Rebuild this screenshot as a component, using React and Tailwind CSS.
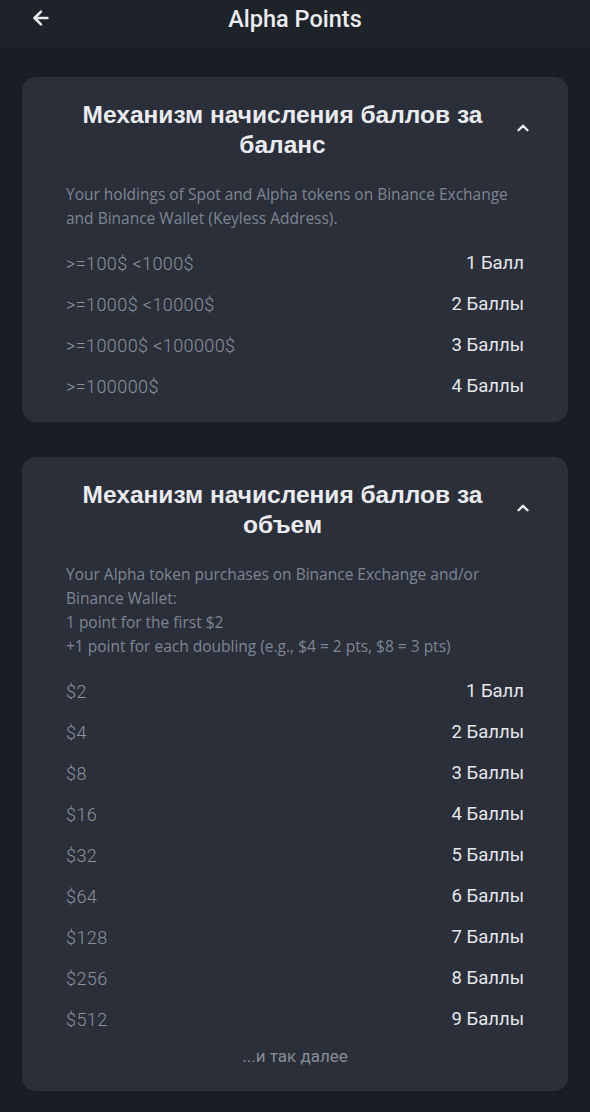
import { ArrowLeft, ChevronUp } from 'lucide-react';

const balanceRows = [
	['>=100$ <1000$', '1 Балл'],
	['>=1000$ <10000$', '2 Баллы'],
	['>=10000$ <100000$', '3 Баллы'],
	['>=100000$', '4 Баллы'],
];

const volumeRows = [
	['$2', '1 Балл'],
	['$4', '2 Баллы'],
	['$8', '3 Баллы'],
	['$16', '4 Баллы'],
	['$32', '5 Баллы'],
	['$64', '6 Баллы'],
	['$128', '7 Баллы'],
	['$256', '8 Баллы'],
	['$512', '9 Баллы'],
];

function Section({ title, children, rows, footer }) {
	return (
		<div className="rounded-[14px] bg-[#2a2f3a] px-[44px] pt-[23px] pb-[14px]">
			<div className="flex items-start">
				<h2 className="flex-1 text-center font-['Liberation_Sans',Arial,sans-serif] text-[24.5px] font-bold leading-[30px] text-[#eaecef]">
					{title}
				</h2>
				<ChevronUp className="mt-[19px] ml-[15px] -mr-[8px] h-[18px] w-[18px] text-[#eaecef]" strokeWidth={3.25} />
			</div>
			<div className="mt-[22px] font-['Open_Sans',sans-serif] text-[15.5px] leading-[24.3px] text-[#7f8692]">
				{children}
			</div>
			<div className="mt-[13px]">
				{rows.map(([left, right]) => (
					<div key={left} className="flex h-[41px] items-center justify-between">
						<span className="-mt-[2px] text-[18px] font-light tracking-[0.4px] text-[#8c929c]">{left}</span>
						<span className="text-[18.5px] font-normal text-[#e4e6e9]">{right}</span>
					</div>
				))}
			</div>
			{footer && (
				<div className="mb-[4px] flex h-[32px] items-center justify-center text-[17px] text-[#868c96]">
					{footer}
				</div>
			)}
		</div>
	);
}

export default function App() {
	return (
		<div className="min-h-[1112px] bg-[#191d24] font-['Roboto',sans-serif]">
			<header className="relative flex h-[48px] items-center justify-center bg-[#1e2229]">
				<ArrowLeft className="absolute left-[30px] top-[7px] h-[22px] w-[22px] text-[#eaecef]" strokeWidth={2.75} />
				<h1 className="-mt-[9px] text-[23.5px] font-medium text-[#eaecef]">Alpha Points</h1>
			</header>

			<div className="flex flex-col gap-[35px] px-[22px] pt-[29px] pb-[20px]">
				<Section title="Механизм начисления баллов за баланс" rows={balanceRows}>
					Your holdings of Spot and Alpha tokens on Binance Exchange and Binance Wallet (Keyless Address).
				</Section>

				<Section title="Механизм начисления баллов за объем" rows={volumeRows} footer="...и так далее">
					<p>Your Alpha token purchases on Binance Exchange and/or Binance Wallet:</p>
					<p>1 point for the first $2</p>
					<p>+1 point for each doubling (e.g., $4 = 2 pts, $8 = 3 pts)</p>
				</Section>
			</div>
		</div>
	);
}
